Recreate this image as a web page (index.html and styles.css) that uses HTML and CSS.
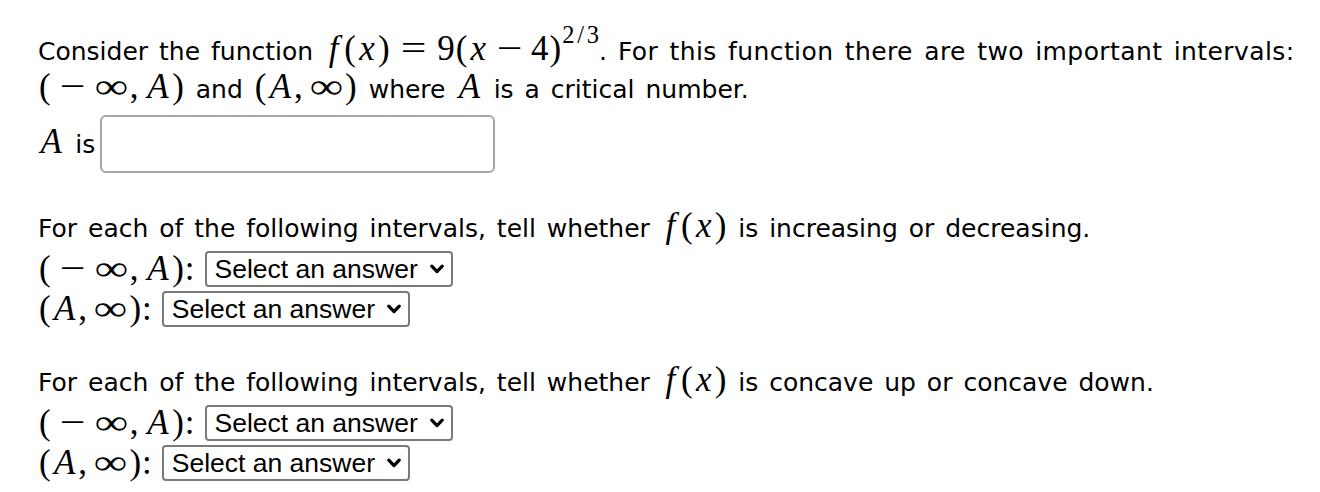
FILE: index.html
```html
<!DOCTYPE html>
<html lang="en">
<head>
    <meta charset="UTF-8">
    <meta name="viewport" content="width=device-width, initial-scale=1.0">
    <title>Critical numbers</title>
    <link rel="stylesheet" href="styles.css">
</head>
<body>
    <div class="problem">
        <p class="lead">
            Consider the function
            <span class="m"><i class="vf">f</i><span class="p">(</span><i class="vx">x</i><span class="p">)</span><span class="rel">=</span><span class="n">9</span><span class="p">(</span><i class="vx">x</i><span class="bin">−</span><span class="n">4</span><span class="p">)</span><span class="sup"><span class="n">2</span><span class="sl">/</span><span class="n">3</span></span></span>. <span class="tail">For this function there are two important intervals:</span><br>
            <span class="m"><span class="p">(</span><span class="bin">−</span><span class="inf">∞</span><span class="cm">,</span><i class="va">A</i><span class="p">)</span></span>
            and
            <span class="m"><span class="p">(</span><i class="va">A</i><span class="cm">,</span><span class="inf">∞</span><span class="p">)</span></span>
            where <span class="m"><i class="va">A</i></span> is a critical number.
        </p>

        <div class="answer">
            <label for="critA"><span class="m"><i class="va">A</i></span> is</label>
            <input type="text" id="critA" class="ans">
        </div>

        <div class="part">
            <p class="ask">For each of the following intervals, tell whether <span class="m"><i class="vf">f</i><span class="p">(</span><i class="vx">x</i><span class="p">)</span></span> is increasing or decreasing.</p>
            <div class="row">
                <span class="m"><span class="p">(</span><span class="bin">−</span><span class="inf">∞</span><span class="cm">,</span><i class="va">A</i><span class="p">)</span><span class="col">:</span></span>
                <span class="pick">
                    <select><option>Select an answer</option><option>increasing</option><option>decreasing</option></select>
                    <svg class="chev" width="14" height="10" viewBox="0 0 14 10"><path d="M1.8 2.2 L7 7.6 L12.2 2.2" fill="none" stroke="#000" stroke-width="3.2" stroke-linecap="round" stroke-linejoin="round"/></svg>
                </span>
            </div>
            <div class="row">
                <span class="m"><span class="p">(</span><i class="va">A</i><span class="cm">,</span><span class="inf">∞</span><span class="p">)</span><span class="col">:</span></span>
                <span class="pick">
                    <select><option>Select an answer</option><option>increasing</option><option>decreasing</option></select>
                    <svg class="chev" width="14" height="10" viewBox="0 0 14 10"><path d="M1.8 2.2 L7 7.6 L12.2 2.2" fill="none" stroke="#000" stroke-width="3.2" stroke-linecap="round" stroke-linejoin="round"/></svg>
                </span>
            </div>
        </div>

        <div class="part">
            <p class="ask">For each of the following intervals, tell whether <span class="m"><i class="vf">f</i><span class="p">(</span><i class="vx">x</i><span class="p">)</span></span> is concave up or concave down.</p>
            <div class="row">
                <span class="m"><span class="p">(</span><span class="bin">−</span><span class="inf">∞</span><span class="cm">,</span><i class="va">A</i><span class="p">)</span><span class="col">:</span></span>
                <span class="pick">
                    <select><option>Select an answer</option><option>concave up</option><option>concave down</option></select>
                    <svg class="chev" width="14" height="10" viewBox="0 0 14 10"><path d="M1.8 2.2 L7 7.6 L12.2 2.2" fill="none" stroke="#000" stroke-width="3.2" stroke-linecap="round" stroke-linejoin="round"/></svg>
                </span>
            </div>
            <div class="row">
                <span class="m"><span class="p">(</span><i class="va">A</i><span class="cm">,</span><span class="inf">∞</span><span class="p">)</span><span class="col">:</span></span>
                <span class="pick">
                    <select><option>Select an answer</option><option>concave up</option><option>concave down</option></select>
                    <svg class="chev" width="14" height="10" viewBox="0 0 14 10"><path d="M1.8 2.2 L7 7.6 L12.2 2.2" fill="none" stroke="#000" stroke-width="3.2" stroke-linecap="round" stroke-linejoin="round"/></svg>
                </span>
            </div>
        </div>
    </div>
</body>
</html>
```
FILE: styles.css
```css
body {
    margin: 0;
    padding: 33px 0 0 38px;
    background-color: #fff;
    color: #000;
    font-family: "DejaVu Sans", sans-serif;
    font-size: 25px;
    word-spacing: 3px;
}

p {
    margin: 0;
}

.lead {
    line-height: 38px;
}

.lead .tail {
    letter-spacing: 0.4px;
}

.ask {
    line-height: 32px;
}

/* math, set close to TeX metrics */
.m {
    font-family: "Liberation Serif", serif;
    font-size: 35px;
    line-height: 0;
    white-space: nowrap;
    word-spacing: 0;
}

.m span,
.m i {
    display: inline-block;
    text-align: center;
}

.m i {
    font-style: italic;
}

.p { width: 0.389em; }
.n { width: 0.5em; }
.vx { width: 0.572em; }
.vf { width: 0.55em; }
.va { width: 0.75em; }
.cm { width: 0.278em; margin-right: 0.167em; }
.col { width: 0.278em; }

.rel {
    width: 0.778em;
    margin: 0 0.278em;
    transform: scaleX(1.3);
}

.bin {
    width: 0.778em;
    margin: 0 0.222em;
    transform: scaleX(1.3);
}

.inf {
    width: 1em;
    transform: scaleX(1.35);
}

.sup {
    font-size: 0.7em;
    vertical-align: 17px;
}

.sl {
    width: 0.5em;
}

.answer {
    display: flex;
    align-items: center;
    margin-top: 6px;
}

.answer label {
    margin-right: 5px;
}

.ans {
    width: 395px;
    height: 58px;
    box-sizing: border-box;
    border: 2px solid #a6a6a6;
    border-radius: 6px;
    font-size: 24px;
}

.part {
    margin-top: 40px;
}

.part + .part {
    margin-top: 38px;
}

.row {
    display: flex;
    align-items: center;
    height: 40px;
}

.row:first-of-type {
    margin-top: 4px;
}

.row .m {
    margin-right: 10px;
}

.pick {
    position: relative;
    display: inline-block;
}

.pick select {
    appearance: none;
    width: 248px;
    height: 36px;
    box-sizing: border-box;
    padding: 0 30px 0 8px;
    border: 2px solid #7a7a7a;
    border-radius: 4px;
    background-color: #fff;
    color: #000;
    font-family: "Liberation Sans", Arial, sans-serif;
    font-size: 26.5px;
    word-spacing: 0;
}

.chev {
    position: absolute;
    right: 9px;
    top: 13px;
    pointer-events: none;
}
```
